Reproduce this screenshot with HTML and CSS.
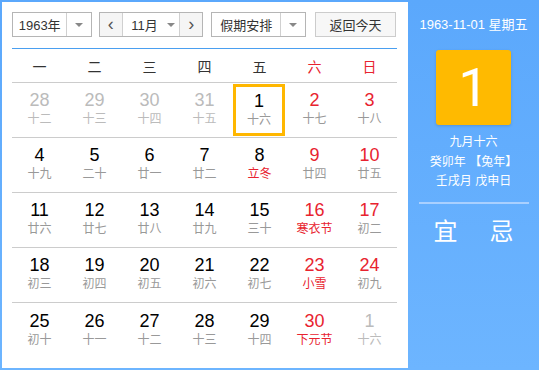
FILE: index.html
```html
<!DOCTYPE html>
<html lang="zh-CN">

<head>
    <meta charset="UTF-8">
    <title>万年历</title>
    <link rel="stylesheet" href="styles.css">
</head>

<body>
    <div class="calendar">
        <div class="main">
            <div class="toolbar">
                <div class="select year-select">
                    <span class="select-text">1963年</span>
                    <span class="select-arrow"><i class="caret"></i></span>
                </div>
                <div class="select month-select">
                    <span class="step">&lsaquo;</span>
                    <span class="select-text">11月<i class="caret"></i></span>
                    <span class="step">&rsaquo;</span>
                </div>
                <div class="select holiday-select">
                    <span class="select-text">假期安排</span>
                    <span class="select-arrow"><i class="caret"></i></span>
                </div>
                <button class="today-btn">返回今天</button>
            </div>

            <div class="weekdays">
                <span>一</span><span>二</span><span>三</span><span>四</span><span>五</span>
                <span class="weekend">六</span><span class="weekend">日</span>
            </div>

            <div class="weeks" id="weeks"></div>
        </div>

        <div class="side">
            <div class="side-date">1963-11-01 星期五</div>
            <div class="side-day">1</div>
            <div class="side-lunar">
                <p>九月十六</p>
                <p>癸卯年 【兔年】</p>
                <p>壬戌月 戊申日</p>
            </div>
            <div class="side-yiji">
                <span>宜</span>
                <span>忌</span>
            </div>
        </div>
    </div>

    <script>
        (function () {
            // [日期, 农历, 类型] 类型: o=非本月 w=周末 f=节日/节气
            const days = [
                ['28', '十二', 'o'], ['29', '十三', 'o'], ['30', '十四', 'o'], ['31', '十五', 'o'],
                ['1', '十六', 'sel'], ['2', '十七', 'w'], ['3', '十八', 'w'],
                ['4', '十九'], ['5', '二十'], ['6', '廿一'], ['7', '廿二'],
                ['8', '立冬', 'f'], ['9', '廿四', 'w'], ['10', '廿五', 'w'],
                ['11', '廿六'], ['12', '廿七'], ['13', '廿八'], ['14', '廿九'],
                ['15', '三十'], ['16', '寒衣节', 'wf'], ['17', '初二', 'w'],
                ['18', '初三'], ['19', '初四'], ['20', '初五'], ['21', '初六'],
                ['22', '初七'], ['23', '小雪', 'wf'], ['24', '初九', 'w'],
                ['25', '初十'], ['26', '十一'], ['27', '十二'], ['28', '十三'],
                ['29', '十四'], ['30', '下元节', 'wf'], ['1', '十六', 'o']
            ];

            const weeks = document.getElementById('weeks');
            for (let i = 0; i < days.length; i += 7) {
                const row = document.createElement('div');
                row.className = 'week';
                days.slice(i, i + 7).forEach(function (d) {
                    const type = d[2] || '';
                    const cell = document.createElement('div');
                    cell.className = 'day';
                    if (type.indexOf('o') >= 0) cell.classList.add('other');
                    if (type.indexOf('w') >= 0) cell.classList.add('weekend');
                    if (type.indexOf('f') >= 0) cell.classList.add('festival');
                    if (type === 'sel') cell.classList.add('selected');
                    cell.innerHTML = '<span class="num">' + d[0] + '</span><span class="lunar">' + d[1] + '</span>';
                    row.appendChild(cell);
                });
                weeks.appendChild(row);
            }
        }());
    </script>
</body>

</html>
```

FILE: styles.css
```css
body {
    margin: 0;
    font-family: "Liberation Sans", "Noto Sans CJK SC", sans-serif;
}

.calendar {
    display: flex;
    width: 539px;
    height: 370px;
    box-sizing: border-box;
    padding: 2px 0 2px 2px;
    background: linear-gradient(#5ba8fc, #6db5ff);
}

.main {
    width: 406px;
    background: #fff;
    padding: 10px 11px 0 10px;
    box-sizing: border-box;
}

/* 顶部工具栏 */
.toolbar {
    display: flex;
    align-items: center;
    height: 25px;
    font-size: 13px;
    color: #333;
}

.select {
    display: flex;
    height: 25px;
    box-sizing: border-box;
    border: 1px solid #b5b5b5;
    background: #fff;
}

.select-text {
    display: flex;
    align-items: center;
    justify-content: center;
}

.select-arrow {
    display: flex;
    align-items: center;
    justify-content: center;
    width: 24px;
    border-left: 1px solid #d0d0d0;
}

.caret {
    width: 0;
    height: 0;
    border-left: 4px solid transparent;
    border-right: 4px solid transparent;
    border-top: 4px solid #888;
}

.year-select {
    width: 80px;
}

.year-select .select-text {
    width: 54px;
}

.month-select {
    width: 104px;
    margin-left: 7px;
}

.month-select .select-text {
    width: 58px;
    gap: 9px;
    padding-left: 4px;
    box-sizing: border-box;
}

.step {
    display: flex;
    align-items: center;
    justify-content: center;
    width: 22px;
    background: #f5f5f5;
    font-size: 18px;
    color: #555;
    border-right: 1px solid #d0d0d0;
}

.step:last-child {
    border-right: none;
    border-left: 1px solid #d0d0d0;
}

.holiday-select {
    width: 95px;
    margin-left: 8px;
}

.holiday-select .select-text {
    width: 69px;
}

.today-btn {
    width: 81px;
    height: 25px;
    margin-left: 9px;
    border: 1px solid #ccc;
    background: #f7f7f7;
    font-family: inherit;
    font-size: 13px;
    color: #333;
    padding: 0;
}

/* 星期 */
.weekdays {
    display: grid;
    grid-template-columns: repeat(7, 55px);
    margin-top: 11px;
    height: 33px;
    border-top: 1px solid #4a9ff0;
    border-bottom: 1px solid #ccc;
    align-items: center;
    text-align: center;
    font-size: 14px;
    color: #333;
}

.weekdays .weekend {
    color: #e8232f;
}

/* 日期 */
.week {
    display: grid;
    grid-template-columns: repeat(7, 55px);
    height: 55px;
    box-sizing: border-box;
    border-bottom: 1px solid #ccc;
}

.week:last-child {
    border-bottom: none;
}

.day {
    display: flex;
    flex-direction: column;
    align-items: center;
    justify-content: center;
    padding-bottom: 2px;
}

.num {
    font-size: 18px;
    line-height: 20px;
    color: #000;
}

.lunar {
    font-size: 12px;
    line-height: 18px;
    color: #999;
}

.weekend .num {
    color: #e8232f;
}

.festival .lunar {
    color: #e8232f;
}

.other .num,
.other .lunar {
    color: #bbb;
}

.selected {
    margin: 1px 2px 1px 1px;
    border: 3px solid #ffb700;
    padding-bottom: 0;
}

/* 右侧详情 */
.side {
    flex: 1;
    display: flex;
    flex-direction: column;
    align-items: center;
    color: #fff;
}

.side-date {
    margin-top: 15px;
    font-size: 13px;
    line-height: 16px;
}

.side-day {
    width: 75px;
    height: 75px;
    margin-top: 17px;
    background: #ffba00;
    border-radius: 3px;
    box-shadow: 0 1px 3px rgba(0, 0, 0, 0.15);
    text-align: center;
    font-family: Roboto, "Liberation Sans", sans-serif;
    font-size: 54px;
    line-height: 75px;
    font-weight: 400;
}

.side-lunar {
    margin-top: 8px;
    text-align: center;
    font-size: 12px;
    line-height: 19.5px;
}

.side-lunar p {
    margin: 0;
}

.side-yiji {
    display: flex;
    justify-content: center;
    gap: 32px;
    width: 110px;
    margin-top: 10px;
    padding-top: 13px;
    border-top: 2px solid #a9d0ff;
    font-size: 24px;
    line-height: 30px;
}
```
